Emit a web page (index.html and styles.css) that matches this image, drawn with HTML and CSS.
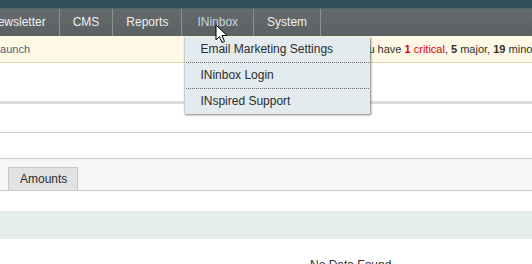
FILE: index.html
```html
<!DOCTYPE html>
<html lang="en">
<head>
    <meta charset="utf-8" />
    <title>Admin</title>
    <link rel="stylesheet" href="styles.css">
</head>
<body>

<div class="header-top"></div>

<ul class="nav">
    <li class="nav-item">Newsletter</li>
    <li class="nav-item">CMS</li>
    <li class="nav-item">Reports</li>
    <li class="nav-item nav-item-active">
        INinbox
        <ul class="dropdown">
            <li>Email Marketing Settings</li>
            <li>INinbox Login</li>
            <li>INspired Support</li>
        </ul>
    </li>
    <li class="nav-item">System</li>
</ul>

<div class="notice">
    <a class="notice-launch">Launch</a>
    <span class="notice-msg">You have <span class="critical"><b>1</b> critical</span>, <b>5</b> major, <b>19</b> minor and <b>88</b> notice unread message(s).</span>
</div>

<div class="content">
    <div class="section-head"></div>
    <div class="section-row"></div>
    <div class="tabs">
        <span class="tab">Amounts</span>
    </div>
    <div class="grid-head"></div>
    <div class="empty">No Data Found</div>
</div>

<svg class="cursor" width="13" height="20" viewBox="0 0 13 20">
    <path d="M1 1 L1 16 L4.5 12.5 L7 18.5 L9.5 17.5 L7 11.5 L12 11.5 Z" fill="#fff" stroke="#000" stroke-width="1" stroke-linejoin="round"/>
</svg>

</body>
</html>
```

FILE: styles.css
```css
* {
    margin: 0;
    padding: 0;
}

html, body {
    width: 100%;
    height: 100%;
}

body {
    overflow: hidden;
    background-color: #fff;
    font-family: "Liberation Sans", Arial, sans-serif;
    font-size: 12px;
    color: #2f2f2f;
    white-space: nowrap;
}

.header-top {
    height: 8px;
    background-color: #30505a;
    border-bottom: 1px solid #4d676d;
}

.nav {
    list-style: none;
    display: flex;
    height: 27px;
    margin-left: -24px;
    background: linear-gradient(#656a6c, #5b6062);
}

.nav-item {
    position: relative;
    padding: 0 13px;
    line-height: 27px;
    color: #eef0f0;
    border-right: 1px solid #8a8f91;
}

.nav-item-active {
    padding: 0 15px 0 15px;
    color: #c4d5e2;
}

.dropdown {
    list-style: none;
    position: absolute;
    top: 28px;
    left: 2px;
    z-index: 2;
    width: 185px;
    background-color: #e3ebee;
    border-left: 1px solid #c3ced2;
    box-shadow: 1px 1px 2px rgba(0, 0, 0, 0.5);
    color: #2c2c2c;
}

.dropdown li {
    height: 25px;
    line-height: 25px;
    padding-left: 14px;
    margin: 0 1px;
    border-bottom: 1px dotted #6e6e6e;
}

.dropdown li:last-child {
    border-bottom: none;
}

.notice {
    display: flex;
    height: 26px;
    line-height: 26px;
    font-size: 11px;
    background-color: #fff8e5;
    border-bottom: 1px solid #eddbb0;
}

.notice-launch {
    flex: 0 0 368px;
    margin-left: -6px;
    color: #3b6486;
}

.notice-msg {
    margin-left: -6px;
    color: #2f2f2f;
}

.critical {
    color: #e0000d;
}

.content {
    padding-top: 38px;
}

.section-head {
    height: 28px;
    border-top: 3px solid #dcdcdc;
    border-bottom: 1px solid #d0d0d0;
}

.section-row {
    height: 25px;
    border-bottom: 1px solid #cdcdcd;
}

.tabs {
    display: flex;
    padding: 8px 0 0 8px;
    background-color: #f6f6f6;
    border-bottom: 1px solid #cacaca;
}

.tab {
    padding: 0 10px 0 11px;
    line-height: 22px;
    background-color: #e2e2e2;
    border: 1px solid #c8c8c8;
    border-bottom: none;
    color: #2c2c2c;
}

.grid-head {
    height: 28px;
    margin-top: 20px;
    background-color: #e5eeed;
}

.empty {
    padding: 19px 0 0 310px;
    line-height: 14px;
}

.cursor {
    position: absolute;
    left: 215px;
    top: 24px;
    z-index: 3;
}
```
